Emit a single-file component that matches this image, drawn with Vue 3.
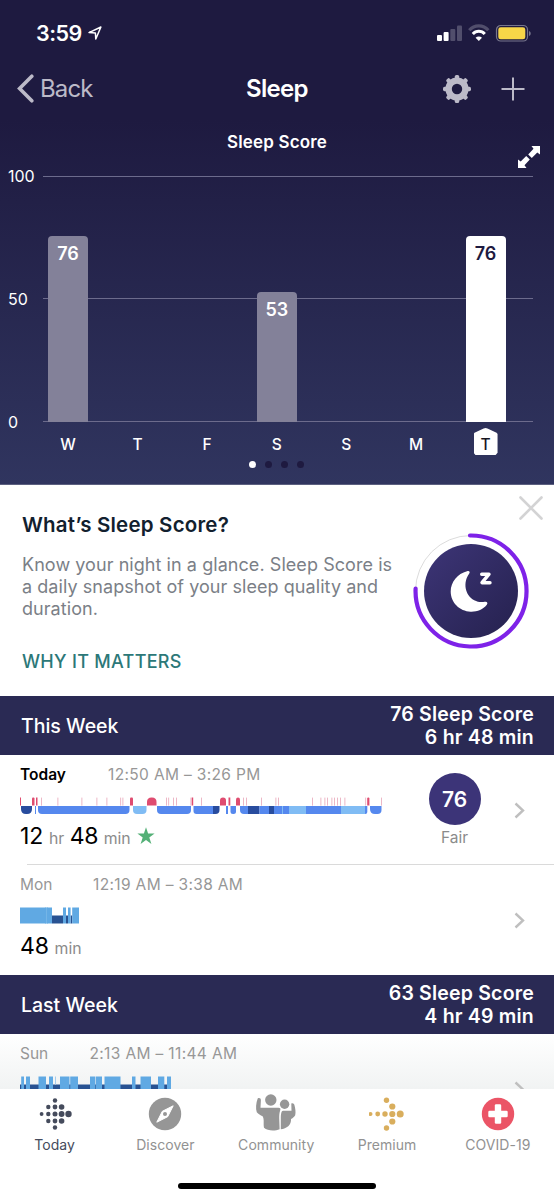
<script setup>
const days = [
  { label: 'W', score: 76 },
  { label: 'T' },
  { label: 'F' },
  { label: 'S', score: 53 },
  { label: 'S' },
  { label: 'M' },
  { label: 'T', score: 76, current: true },
]

const BLUE = '#5588ee'
const DARK = '#284c9e'
const LIGHT = '#80bcf4'

// Sleep stages as [start, end, colour, left radius, right radius]
const stages = [
  [1, 12, DARK, 5, 5],
  [15, 16, BLUE, 0, 0],
  [18, 109.5, BLUE, 4, 4],
  [113, 126.5, LIGHT, 4, 4],
  [137, 171, BLUE, 4, 4],
  [173.5, 193, BLUE, 3, 0],
  [193, 199.5, DARK, 0, 4],
  [206, 208, BLUE, 0, 0],
  [210.5, 216, BLUE, 2.5, 2.5],
  [220, 228, BLUE, 4, 0],
  [228, 239.5, DARK, 0, 0],
  [239.5, 249, BLUE, 0, 0],
  [249, 254, DARK, 0, 0],
  [254, 262, BLUE, 0, 0],
  [262, 263, LIGHT, 0, 0],
  [263, 269, BLUE, 0, 0],
  [269, 286, LIGHT, 0, 0],
  [286, 321, BLUE, 0, 0],
  [321, 345, LIGHT, 0, 0],
  [345, 347.3, BLUE, 0, 2],
  [350, 361.5, BLUE, 5, 4],
]
// Awake periods as [start, end, top radius]
const awake = [
  [0, 1, 0], [12, 14.5, 1], [16, 17.5, 0], [110, 113, 1], [127, 136.5, 4.5],
  [171.7, 173.2, 0], [200, 206, 3], [208.5, 210.3, 0], [216, 220, 2], [347.2, 349.4, 1],
]
const restless = [21, 37.5, 61.5, 76.5, 86.5, 100.3, 102.5, 146, 148.3, 153, 156, 170.5, 181, 223, 226, 241, 255.5, 258, 292, 300.5, 304.5, 307, 311.5, 314, 317, 320, 324.5, 345.3, 361]

function stagePath([a, b, , l, r]) {
  return `M${a} 9H${b}V${17 - r}Q${b} 17 ${b - r} 17H${a + l}Q${a} 17 ${a} ${17 - l}Z`
}
function awakePath([a, b, r]) {
  return `M${a} 8.6V${0.6 + r}Q${a} .6 ${a + r} .6H${b - r}Q${b} .6 ${b} ${0.6 + r}V8.6Z`
}

const mon = [[0, 26], [26.6, 32], [43, 46], [48, 50.6], [52.2, 59]]
const monDark = [[32, 43], [46, 48], [50.6, 52.2]]
const sun = [[1.2, 4], [6, 10], [18.5, 26], [29, 33], [40, 49.5], [50.2, 58], [70, 75], [75.6, 82], [84.5, 100.5], [112, 115.5], [120.5, 131], [138, 144.3], [147, 151]]

// Logo dots as [x, y, radius]
const todayDots = [
  [17, 3.5, 2.2], [10.3, 10, 2.2], [17, 10, 2.4], [23.6, 10, 2.8],
  [3.6, 17, 1.9], [10.3, 17, 2.2], [17, 17, 2.5], [23.6, 17, 2.9], [30.5, 17, 3.2],
  [10.3, 24, 2.2], [17, 24, 2.4], [23.6, 24, 2.8], [17, 30.5, 2.2],
]
const premiumDots = [
  [17.5, 3.2, 2.7], [23.3, 9.5, 3.1], [1.5, 17, 2], [8.7, 17, 2.4], [16, 17, 2.7],
  [23.3, 17, 3.1], [31.2, 17, 3.5], [23.3, 24.5, 3.1], [17.5, 31, 2.7],
]
</script>

<template>
  <div class="screen">
    <header class="hero">
      <div class="status">
        <span class="time">3:59</span>
        <svg class="loc" width="14" height="14" viewBox="0 0 14 14"><path d="M1 6.6 12.9 1 7.8 13 7.4 6.9Z" fill="none" stroke="#fff" stroke-width="1.5" stroke-linejoin="round" /></svg>
        <svg class="indicators" width="96" height="20" viewBox="0 0 96 20">
          <rect x="1" y="12" width="5" height="6" rx="1" fill="#fff" />
          <rect x="7.6" y="9" width="5" height="9" rx="1" fill="#fff" />
          <rect x="14.3" y="6" width="5" height="12" rx="1" fill="#514e6c" />
          <rect x="21" y="2.5" width="5" height="15.5" rx="1" fill="#514e6c" />
          <path d="M33.3 7.2a12.5 12.5 0 0 1 19 0" fill="none" stroke="#514e6c" stroke-width="3.2" />
          <path d="M36.8 10.9a8.2 8.2 0 0 1 12 0" fill="none" stroke="#fff" stroke-width="3" />
          <path d="M42.8 18 39.6 14.7a4.6 4.6 0 0 1 6.4 0Z" fill="#fff" />
          <rect x="60.5" y="2.5" width="31" height="15.5" rx="4.2" fill="none" stroke="#77758c" stroke-width="1.2" />
          <rect x="62.3" y="4.3" width="27" height="12" rx="2.4" fill="#f8d648" />
          <path d="M93 8v5c2.3-.8 2.3-4.2 0-5z" fill="#77758c" />
        </svg>
      </div>

      <nav class="nav">
        <div class="back">
          <svg width="17" height="29" viewBox="0 0 17 29"><path d="M14.8 2.2 2.6 14.5 14.8 26.8" fill="none" stroke="#bcbac8" stroke-width="3.6" stroke-linecap="round" /></svg>
          <span>Back</span>
        </div>
        <h1>Sleep</h1>
        <div class="actions">
          <svg width="28" height="28" viewBox="-14 -14 28 28" fill="#bcbac8">
            <circle r="8.4" fill="none" stroke="#bcbac8" stroke-width="6.4" />
            <rect v-for="i in 8" :key="i" x="-2.2" y="-14" width="4.4" height="5" rx="1.6" :transform="`rotate(${i * 45})`" />
          </svg>
          <svg width="24" height="24" viewBox="0 0 24 24"><path d="M12 .5v23M.5 12h23" stroke="#bcbac8" stroke-width="2" /></svg>
        </div>
      </nav>

      <div class="chart-head">
        <h2>Sleep Score</h2>
        <svg class="expand" width="22" height="22" viewBox="0 0 22 22" fill="#fff">
          <path d="M13.500 0H22V8.500L19.300 6.500 13.800 12 10.200 8.400 15.500 2.800Z" />
          <path d="M8.500 22H0V13.500L2.700 15.500 8.200 10 11.800 13.600 6.500 19.200Z" />
        </svg>
      </div>

      <div class="chart">
        <div class="axis"><span>100</span><span>50</span><span>0</span></div>
        <div class="plot">
          <div class="lines"><i /><i /><i /></div>
          <div class="bars">
            <div v-for="(d, i) in days" :key="i" class="slot">
              <div v-if="d.score" class="bar" :class="{ current: d.current }" :style="{ height: (d.score === 76 ? 186 : 130) + 'px' }">{{ d.score }}</div>
            </div>
          </div>
        </div>
      </div>
      <div class="days">
        <div v-for="(d, i) in days" :key="i" class="day" :class="{ current: d.current }"><span>{{ d.label }}</span></div>
      </div>
      <div class="dots"><i class="on" /><i /><i /><i /></div>
    </header>

    <section class="info">
      <div class="copy">
        <h3>What’s Sleep Score?</h3>
        <p>Know your night in a glance. Sleep Score is<br>a daily snapshot of your sleep quality and<br>duration.</p>
        <a>WHY IT MATTERS</a>
      </div>
      <div class="art">
        <svg class="close" width="24" height="24" viewBox="0 0 24 24"><path d="M1.500 1.500 22.500 22.500M22.500 1.500 1.500 22.500" stroke="#d3d3d4" stroke-width="2.600" stroke-linecap="round" /></svg>
        <svg class="moon" width="116" height="116" viewBox="-58 -58 116 116">
          <defs>
            <linearGradient id="disc" x1="0" y1="0" x2="1" y2="1"><stop offset="0" stop-color="#3d3577" /><stop offset="1" stop-color="#25214e" /></linearGradient>
          </defs>
          <circle r="55.500" fill="none" stroke="#dcdcdc" stroke-width="1" />
          <path d="M-1-55.500A55.500 55.500 0 1 1-55.400-2.500" fill="none" stroke="#7e22e8" stroke-width="4.200" stroke-linecap="round" />
          <circle r="47" fill="url(#disc)" />
          <path d="M-4-19.800C-1.600-20.800-.6-18.900-1.900-17.200C-8.300-8.300-6 4.500 3.200 9.300C7 11.300 10.500 11.400 13.800 10.800C16.200 10.300 17.100 12.100 15.800 13.800C11.800 18.700 6.300 20.900-.4 20.700C-11.300 20.500-20.300 11.600-20.300 .6C-20.300-9.200-13.400-17.500-4-19.800Z" fill="#fff" />
          <path d="M10.700-16.800H18L11-8.300H19" fill="none" stroke="#fff" stroke-width="3.400" stroke-linecap="round" stroke-linejoin="round" />
        </svg>
      </div>
    </section>

    <div class="week">
      <span class="name">This Week</span>
      <div class="totals"><span>76 Sleep Score</span><span>6 hr 48 min</span></div>
    </div>

    <article class="entry today">
      <div class="detail">
        <div class="when"><b>Today</b><span class="range">12:50 AM – 3:26 PM</span></div>
        <svg class="graph" width="362" height="17" viewBox="0 0 362 17">
          <path v-for="(s, i) in stages" :key="'s' + i" :d="stagePath(s)" :fill="s[2]" />
          <rect v-for="x in restless" :key="x" :x="x" y=".6" width=".8" height="8" fill="#e8a5b8" />
          <path v-for="(s, i) in awake" :key="'a' + i" :d="awakePath(s)" fill="#df4c70" />
        </svg>
        <div class="length">
          <strong>12</strong><small>hr</small><strong>48</strong><small>min</small>
          <svg width="18" height="18" viewBox="0 0 18 18"><path d="M9 .3 11.100 6.600H17.600L12.300 10.500 14.400 17 9 13 3.600 17 5.700 10.500.400 6.600H6.900Z" fill="#54b077" /></svg>
        </div>
      </div>
      <div class="rating"><div class="badge">76</div><span>Fair</span></div>
      <svg class="chev" width="11" height="17" viewBox="0 0 11 17"><path d="M1.500 1.500 9 8.500 1.500 15.500" fill="none" stroke="#bfbfbf" stroke-width="2.400" /></svg>
    </article>

    <article class="entry mon">
      <div class="detail">
        <div class="when"><span class="dim">Mon</span><span class="range">12:19 AM – 3:38 AM</span></div>
        <svg class="graph" width="362" height="17" viewBox="0 0 362 17">
          <rect x="25" y=".5" width="3" height="16" fill="#83bfe9" />
          <rect v-for="s in monDark" :key="s[0]" :x="s[0]" y="8.500" :width="s[1] - s[0]" height="8" fill="#285292" />
          <rect v-for="s in mon" :key="s[0]" :x="s[0]" y=".5" :width="s[1] - s[0]" height="16" fill="#60a9e3" />
        </svg>
        <div class="length"><strong>48</strong><small>min</small></div>
      </div>
      <svg class="chev" width="11" height="17" viewBox="0 0 11 17"><path d="M1.500 1.500 9 8.500 1.500 15.500" fill="none" stroke="#bfbfbf" stroke-width="2.400" /></svg>
    </article>

    <div class="week last">
      <span class="name">Last Week</span>
      <div class="totals"><span>63 Sleep Score</span><span>4 hr 49 min</span></div>
    </div>

    <article class="entry sun">
      <div class="detail">
        <div class="when"><span class="dim">Sun</span><span class="range">2:13 AM – 11:44 AM</span></div>
        <svg class="graph" width="362" height="17" viewBox="0 0 362 17">
          <rect x="0" y="8.500" width="151" height="8.500" fill="#285292" />
          <rect v-for="s in sun" :key="s[0]" :x="s[0]" y=".5" :width="s[1] - s[0]" height="16.500" fill="#60a9e3" />
          <rect x="35" y=".5" width="1" height="8" fill="#a7cdec" />
        </svg>
      </div>
      <svg class="chev" width="11" height="17" viewBox="0 0 11 17"><path d="M1.500 1.500 9 8.500 1.500 15.500" fill="none" stroke="#bfbfbf" stroke-width="2.400" /></svg>
    </article>

    <footer class="tabs">
      <div class="tab active">
        <svg width="34" height="34" viewBox="0 0 34 34" fill="#454b5c"><circle v-for="(c, i) in todayDots" :key="i" :cx="c[0]" :cy="c[1]" :r="c[2]" /></svg>
        <span>Today</span>
      </div>
      <div class="tab">
        <svg width="34" height="34" viewBox="0 0 34 34"><circle cx="17" cy="17" r="16.200" fill="#969696" /><path d="M25.200 8.800 19.700 19.700 8.800 25.200 14.300 14.300Z" fill="#fff" stroke="#fff" stroke-linejoin="round" /><circle cx="17" cy="17" r="2" fill="#969696" /></svg>
        <span>Discover</span>
      </div>
      <div class="tab community">
        <svg width="42" height="38" viewBox="0 0 42 38" fill="#969696">
          <circle cx="15.800" cy="6" r="5.700" />
          <path d="M2.700 4.500C4.200 3.300 6 4.400 5.900 6.200L5.500 13.800H23.500C25 13.800 25.800 14.700 25.300 16C23.400 21 24.600 26.500 24.600 35.200C20 37.200 12.500 37 9 33.800C8.200 29 9.500 25.800 7.600 22.300C5.500 21.200 3.300 19.800 1.800 18.200C.5 14.500 1 9 2.700 4.500Z" />
          <circle cx="29.600" cy="10.300" r="4.700" />
          <path d="M36.300 9.500C37.800 8.600 39 9.500 39.400 11C40.300 14.300 41 18 40.200 21.200C39.200 23.200 37.400 24.200 36 25C36.600 30.800 31.500 34.800 25.800 35.300V23.500C26 19.500 26.300 17 28 16.800H36.500Z" />
        </svg>
        <span>Community</span>
      </div>
      <div class="tab">
        <svg width="36" height="34" viewBox="0 0 36 34" fill="#d9ae5d"><circle v-for="(c, i) in premiumDots" :key="i" :cx="c[0]" :cy="c[1]" :r="c[2]" /></svg>
        <span>Premium</span>
      </div>
      <div class="tab covid">
        <svg width="34" height="34" viewBox="0 0 34 34"><circle cx="17" cy="17" r="16.200" fill="#eb5466" /><rect x="13.800" y="7.300" width="6.400" height="19.400" rx="1.300" fill="#fff" /><rect x="7.300" y="13.800" width="19.400" height="6.400" rx="1.300" fill="#fff" /></svg>
        <span>COVID-19</span>
      </div>
      <div class="home" />
    </footer>
  </div>
</template>

<style>
body { margin: 0; background: #fff; }
</style>

<style scoped>
* { box-sizing: border-box; }
.screen { width: 554px; height: 1200px; overflow: hidden; display: flex; flex-direction: column; font-family: Inter, "Liberation Sans", sans-serif; color: #111; background: #fff; white-space: nowrap; }
svg { display: block; flex: none; }
h1, h2, h3, p { margin: 0; }

.hero { height: 485px; flex: none; color: #fff; background: linear-gradient(#1e1a40 0, #1e1a40 120px, #30355f 485px); border-bottom: 1px solid #5c6080; }
.status { height: 66px; padding: 0 22px 0 36px; display: flex; align-items: center; }
.time { font-size: 21.500px; font-weight: 600; line-height: 30px; letter-spacing: -.5px; width: 52px; }
.indicators { margin-left: auto; }
.nav { height: 45px; display: grid; grid-template-columns: 1fr auto 1fr; align-items: center; padding: 0 29px 0 17px; }
.back { display: flex; align-items: center; gap: 6px; color: #bcbac8; font-size: 24px; letter-spacing: -.9px; }
h1 { font-size: 24px; font-weight: 600; letter-spacing: -.7px; line-height: 30px; padding-left: 12px; }
.actions { display: flex; gap: 30px; justify-content: flex-end; align-items: center; }
.chart-head { height: 65px; position: relative; padding-top: 19px; }
h2 { font-size: 17px; font-weight: 600; line-height: 24px; text-align: center; letter-spacing: .15px; }
.expand { position: absolute; right: 14px; top: 35px; }
.chart { display: flex; height: 246px; padding-right: 21px; }
.axis { width: 43px; padding-left: 8px; display: flex; flex-direction: column; justify-content: space-between; font-size: 16px; line-height: 20px; margin: -10px 0 -10px; }
.plot { flex: 1; display: grid; }
.lines, .bars { grid-area: 1 / 1; }
.lines { display: flex; flex-direction: column; justify-content: space-between; }
.lines i { height: 1px; background: #6c6b8c; }
.lines i:nth-child(2) { margin-bottom: 1px; }
.bars { display: grid; grid-template-columns: repeat(7, 69.600px); margin-left: -9.800px; align-items: end; justify-items: center; }
.bar { width: 40px; border-radius: 4px 4px 0 0; background: #838199; font-size: 18px; line-height: 22px; padding-top: 7px; font-weight: 600; text-align: center; }
.bar.current { background: #fff; color: #1e1a40; }
.days { display: grid; grid-template-columns: repeat(7, 69.600px); margin-left: 33.200px; padding-top: 6px; height: 38px; }
.day { display: flex; justify-content: center; font-size: 15.500px; font-weight: 500; }
.day span { width: 24px; height: 27px; line-height: 33px; text-align: center; }
.day.current span { color: #16151f; background: #fff; clip-path: polygon(0 22%, 4% 18%, 42% 2%, 50% 0, 58% 2%, 96% 18%, 100% 22%, 100% 92%, 92% 100%, 8% 100%, 0 92%); }
.dots { display: flex; justify-content: center; gap: 9px; padding: 1px 2px 0 0; }
.dots i { width: 7px; height: 7px; border-radius: 50%; background: #1e1a40; }
.dots i.on { background: #fff; }

.info { height: 211px; flex: none; display: flex; justify-content: space-between; padding: 0 11px 0 22px; }
.copy { padding-top: 26px; }
h3 { font-size: 20.500px; line-height: 27px; font-weight: 600; letter-spacing: .2px; color: #12202e; }
p { margin-top: 16px; font-size: 18px; line-height: 22px; color: #7b7f87; letter-spacing: .06px; }
.copy a { display: block; margin-top: 31px; font-size: 18px; line-height: 22px; font-weight: 500; color: #2c7878; letter-spacing: .3px; }
.art { padding-top: 11px; display: flex; flex-direction: column; align-items: flex-end; }
.moon { margin: 13px 14.500px 0 0; }

.week { height: 59px; flex: none; background: #2a2a54; color: #fff; display: flex; align-items: center; justify-content: space-between; padding: 1px 20px 0 21px; font-size: 19.500px; font-weight: 500; }
.totals { display: flex; flex-direction: column; align-items: flex-end; line-height: 23px; font-weight: 600; letter-spacing: .2px; }
.entry { display: flex; position: relative; flex: none; padding: 0 29px 0 20px; background: #fff; }
.detail { flex: 1; padding-top: 10px; }
.when { display: flex; font-size: 15.500px; line-height: 20px; color: #979797; }
.when b { color: #000; font-weight: 600; width: 88px; }
.when .dim { width: 73px; }
.range { letter-spacing: .35px; }
.graph { margin-top: 12px; }
.length { display: flex; align-items: baseline; height: 28px; margin-top: 8px; line-height: 28px; }
.length strong { font-weight: 400; font-size: 23px; color: #000; }
.length small { font-size: 15.800px; color: #8b8b8b; margin: 0 5.500px; }
.length small + strong { letter-spacing: -.3px; }
.length svg { align-self: center; margin-left: 1px; }
.today { height: 110px; }
.today::after { content: ""; position: absolute; left: 27px; right: 0; bottom: 0; height: 1px; background: #dadada; }
.rating { width: 52px; margin-right: 33.500px; padding-top: 18px; display: flex; flex-direction: column; align-items: center; font-size: 15.500px; line-height: 20px; color: #8b8b8b; }
.badge { width: 52px; height: 52px; border-radius: 50%; background: #3c3478; color: #fff; font-size: 21px; font-weight: 600; line-height: 53px; text-align: center; margin-bottom: 3px; }
.chev { margin-top: 47px; }
.mon { height: 110px; }
.sun { height: 55px; overflow: hidden; background: linear-gradient(#fff, #f1f3f3); }
.sun .when .dim { width: 69.500px; }
.tabs { height: 111px; flex: none; background: #fff; display: grid; grid-template-columns: repeat(5, 110.800px); grid-template-rows: 94px 6px; }
.tab { display: flex; flex-direction: column; align-items: center; padding: 7.500px 1.500px 0 0; font-size: 14px; color: #929292; letter-spacing: .05px; }
.tab span { line-height: 18px; margin-top: 5px; }
.tab.active { color: #454b5c; }
.community { padding-top: 5px; }
.community span { margin-top: 3.500px; }
.home { grid-column: 1 / -1; justify-self: center; width: 198px; height: 6px; border-radius: 3px; background: #000; }
</style>
